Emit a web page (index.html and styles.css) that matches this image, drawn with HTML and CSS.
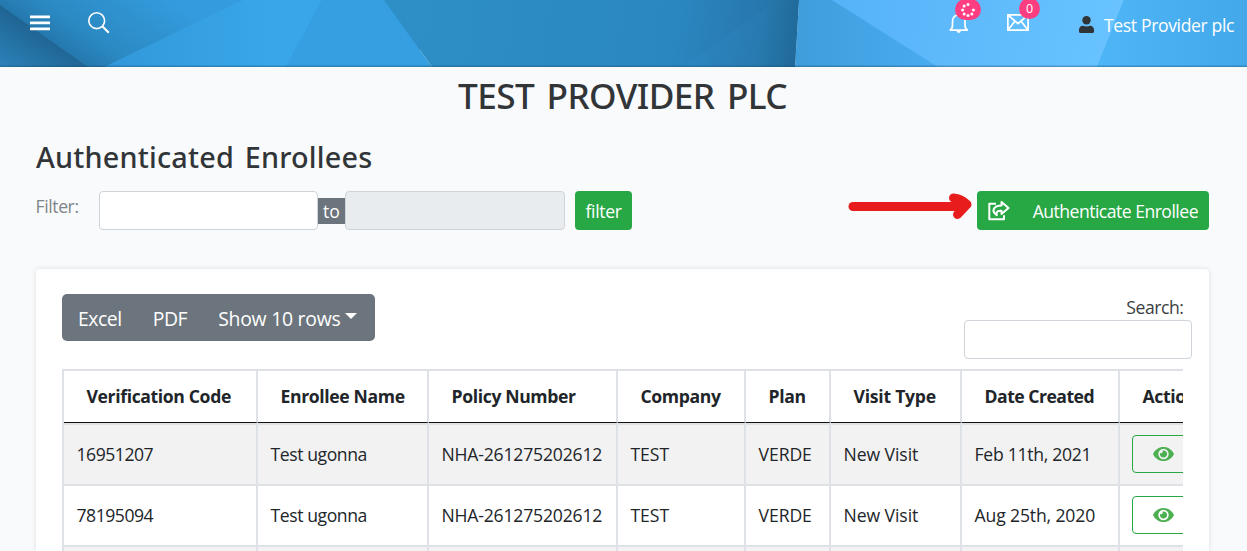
FILE: index.html
```html
<!DOCTYPE html>
<html lang="en">
<head>
<meta charset="utf-8">
<title>Authenticated Enrollees</title>
<link rel="stylesheet" href="styles.css">
</head>
<body>
<svg class="defs" aria-hidden="true">
  <symbol id="eye" viewBox="0 0 21 14">
    <path fill-rule="evenodd" d="M10.5 0C5.8 0 2 2.7 0 7c2 4.300 5.800 7 10.500 7S19 11.300 21 7C19 2.700 15.200 0 10.500 0zm0 12.200a5.200 5.200 0 1 1 0-10.400 5.200 5.200 0 0 1 0 10.400z"/>
    <path d="M10.500 3.400a3.600 3.600 0 1 1-3.500 2.700 1.900 1.900 0 0 0 2.600-2.500c.3-.1.600-.2.900-.2z"/>
  </symbol>
</svg>
<header class="topbar">
  <svg class="backdrop" viewBox="0 0 1247 67" preserveAspectRatio="none" aria-hidden="true">
    <defs>
      <linearGradient id="g1" gradientUnits="userSpaceOnUse" x1="45" y1="36" x2="105" y2="-50"><stop offset="0" stop-color="#2479ae"/><stop offset=".25" stop-color="#2b89c2"/><stop offset="1" stop-color="#349cde"/></linearGradient>
      <linearGradient id="g2" gradientUnits="userSpaceOnUse" x1="46" y1="34" x2="18" y2="78"><stop offset="0" stop-color="#1f6492"/><stop offset="1" stop-color="#2b82ba"/></linearGradient>
      <linearGradient id="g3" gradientUnits="userSpaceOnUse" x1="100" y1="0" x2="270" y2="0"><stop offset="0" stop-color="#3198d8"/><stop offset="1" stop-color="#38a6e9"/></linearGradient>
      <linearGradient id="g4" gradientUnits="userSpaceOnUse" x1="385" y1="0" x2="797" y2="60"><stop offset="0" stop-color="#2e8fc7"/><stop offset=".7" stop-color="#2b87c0"/><stop offset="1" stop-color="#246fa3"/></linearGradient>
      <linearGradient id="g5" gradientUnits="userSpaceOnUse" x1="690" y1="0" x2="798" y2="12"><stop offset="0" stop-color="#2c87c1"/><stop offset=".65" stop-color="#287bb1"/><stop offset="1" stop-color="#216a9a"/></linearGradient>
      <linearGradient id="g6" gradientUnits="userSpaceOnUse" x1="797" y1="0" x2="935" y2="0"><stop offset="0" stop-color="#3f9ddc"/><stop offset="1" stop-color="#49acef"/></linearGradient>
      <linearGradient id="g7" gradientUnits="userSpaceOnUse" x1="840" y1="0" x2="1120" y2="40"><stop offset="0" stop-color="#57b3f8"/><stop offset="1" stop-color="#68c3ff"/></linearGradient>
      <linearGradient id="g8" gradientUnits="userSpaceOnUse" x1="1100" y1="0" x2="1247" y2="0"><stop offset="0" stop-color="#4eb5f6"/><stop offset="1" stop-color="#43a8e9"/></linearGradient>
    </defs>
    <rect width="420" height="67" fill="url(#g1)"/>
    <path d="M0 5L88 67H0z" fill="url(#g2)"/>
    <path d="M243 0H322L286 67H104z" fill="url(#g3)"/>
    <path d="M322 0H384L432 67H286z" fill="#369fe1"/>
    <path d="M384 0H799L795 67H432z" fill="url(#g4)"/>
    <path d="M777 0H799L795 67H683z" fill="url(#g5)"/>
    <path d="M799 0H1247V67H795z" fill="url(#g6)"/>
    <path d="M832 0H1124L1097 67H938z" fill="url(#g7)"/>
    <path d="M1124 0H1247V67H1097z" fill="url(#g8)"/>
    <rect y="65.500" width="1247" height="1.500" fill="#1a4a6b" opacity=".35"/>
  </svg>
  <nav class="nav-left">
    <svg class="icon-menu" width="20" height="16" fill="#fff"><path d="M0 .500h20v2.700H0zM0 6.500h20v2.700H0zM0 12.500h20v2.700H0z"/></svg>
    <svg class="icon-search" width="22" height="22" fill="none" stroke="#fff" stroke-width="1.600"><circle cx="8.700" cy="8.700" r="7.900"/><path d="M14.300 14.300l6.500 6.500" stroke-width="2.100"/></svg>
  </nav>
  <nav class="nav-right">
    <div class="notice bell">
      <svg width="20" height="19" viewBox="0 0 20 19" fill="none" stroke="#fff" stroke-width="1.700"><path d="M.8 16.200c2-1 2.700-2.200 2.700-5V7.500C3.500 3.300 6 .8 9.700.8s6.300 2.500 6.300 6.700v3.700c0 2.800.8 4 2.800 5z"/><path d="M7.200 16.300h5l-1.200 2.400H8.500z" fill="#fff" stroke="none"/></svg>
      <span class="badge wide"><svg width="14" height="14" viewBox="-7 -7 14 14" fill="#fff"><circle cy="-5.400" r="1.500"/><circle cx="-3.900" cy="-3.900" r="1.500"/><circle cx="-5.400" r="1.500"/><circle cx="-3.900" cy="3.900" r="1.500"/><circle cy="5.400" r="1.500"/><circle cx="3.900" cy="3.900" r="1.500"/><circle cx="5.400" r="1.500"/></svg></span>
    </div>
    <div class="notice mail">
      <svg width="22" height="17" viewBox="0 0 22 17" fill="none" stroke="#fff" stroke-width="1.700"><path d="M.9.900h20.200v15.200H.9zM1 1l10 8.700L21 1M1 16l6.700-8.500M21 16l-6.700-8.500"/></svg>
      <span class="badge">0</span>
    </div>
    <div class="user">
      <svg width="15" height="17" viewBox="0 0 15 17" fill="#2f3437"><circle cx="7.500" cy="4.200" r="4.200"/><path d="M4 9.800c2.200 1 4.800 1 7 0 2.500 0 4 1.700 4 4v1.700c0 .9-.6 1.500-1.500 1.500h-12C.6 17 0 16.400 0 15.500v-1.700c0-2.300 1.500-4 4-4z"/></svg>
      <span>Test Provider plc</span>
    </div>
  </nav>
</header>
<main class="content">
  <h1 class="title">TEST PROVIDER PLC</h1>
  <h2 class="subtitle">Authenticated Enrollees</h2>
  <div class="filters">
    <span class="filter-label">Filter:</span>
    <input class="field from" type="text" aria-label="From">
    <span class="to">to</span>
    <input class="field until" type="text" aria-label="To" disabled>
    <button class="btn filter-btn">filter</button>
    <button class="btn auth-btn">
      <svg width="22" height="20" viewBox="0 0 22 20" fill="none" stroke="#fff" stroke-linejoin="round"><path d="M8 2.800H1.300v15.500H16V14.200" stroke-width="2"/><path d="M13.500 1l7 6-7 6V9.700C9.500 9.500 8 10.800 8.800 14.200 3.200 10.500 5 4.500 13.500 4.400z" stroke-width="2"/></svg>
      <span>Authenticate Enrollee</span>
    </button>
    <svg class="pointer" width="124" height="28" viewBox="0 0 124 28" fill="none" stroke="#e81c1c" stroke-linecap="round" stroke-linejoin="round" aria-hidden="true"><path d="M5 13.500H112" stroke-width="9"/><path d="M105.500 5Q113 5.500 119 11.500L109.500 21.500" stroke-width="9"/></svg>
  </div>
  <section class="card">
    <div class="tools">
      <div class="btn-group">
        <button>Excel</button><button>PDF</button><button class="rows">Show 10 rows<i class="caret"></i></button>
      </div>
      <label class="search"><span>Search:</span><input class="field" type="text"></label>
    </div>
    <div class="table-wrap">
      <div class="table">
        <div class="row head"><b>Verification Code</b><b>Enrollee Name</b><b>Policy Number</b><b>Company</b><b>Plan</b><b class="visit">Visit Type</b><b class="created">Date Created</b><b>Actions</b></div>
        <div class="row odd"><span class="code">16951207</span><span class="name">Test ugonna</span><span class="policy">NHA-261275202612</span><span>TEST</span><span>VERDE</span><span>New Visit</span><span class="date">Feb 11th, 2021</span><span class="act"><button class="view" aria-label="View"><svg width="21" height="14"><use href="#eye"/></svg></button></span></div>
        <div class="row"><span class="code">78195094</span><span class="name">Test ugonna</span><span class="policy">NHA-261275202612</span><span>TEST</span><span>VERDE</span><span>New Visit</span><span class="date-alt">Aug 25th, 2020</span><span class="act"><button class="view" aria-label="View"><svg width="21" height="14"><use href="#eye"/></svg></button></span></div>
        <div class="row odd"><span></span><span></span><span></span><span></span><span></span><span></span><span></span><span></span></div>
      </div>
    </div>
  </section>
</main>
</body>
</html>
```
FILE: styles.css
```css
* { box-sizing: border-box; }
html, body { height: 100%; }
body { margin: 0; overflow: hidden; display: flex; flex-direction: column; background: #f9fafc; color: #212529; font: 400 17.6px/26px "Open Sans", "Noto Sans", sans-serif; }
button { font: inherit; border: 0; padding: 0; background: none; }
.defs { position: absolute; width: 0; height: 0; }

.topbar { position: relative; flex: none; height: 67px; display: flex; justify-content: space-between; color: #fff; overflow: hidden; }
.backdrop { position: absolute; inset: 0; width: 100%; height: 100%; }
.nav-left, .nav-right { position: relative; display: flex; align-items: flex-start; }
.nav-left { padding-left: 30px; gap: 38px; }
.icon-menu { margin-top: 15px; }
.icon-search { margin-top: 12px; }
.nav-right { padding-right: 12px; }
.notice { position: relative; }
.notice > svg { display: block; }
.bell { width: 20px; margin: 14px 38px 0 0; }
.mail { width: 22px; margin: 14px 50px 0 0; }
.badge { position: absolute; left: 12px; top: -16px; width: 21px; height: 21px; border-radius: 11px; background: #ff3d81; display: flex; align-items: center; justify-content: center; font-size: 12.5px; line-height: 21px; }
.badge.wide { left: 6px; top: -15px; width: 26px; }
.user { display: flex; gap: 10px; margin-top: 12px; letter-spacing: -.37px; white-space: nowrap; width: 156px; }
.user svg { margin-top: 4px; flex: none; }

.content { flex: 1; min-height: 0; padding: 7px 38px 0 36px; display: flex; flex-direction: column; }
.title { margin: 0; font: 500 35.2px/42px "Noto Sans", sans-serif; letter-spacing: -.6px; word-spacing: 4px; text-align: center; color: #313538; }
.subtitle { margin: 23px 0 0; font: 500 28.8px/36px "Noto Sans", sans-serif; letter-spacing: .2px; word-spacing: 3px; color: #313538; }
.filters { position: relative; display: flex; align-items: flex-start; margin-top: 16px; height: 39px; }
.filter-label { width: 63px; margin-top: 2px; color: #80858a; letter-spacing: -.4px; text-indent: -.5px; }
.field { height: 39px; border: 1px solid #ced4da; border-radius: 4px; background: #fff; padding: 6px 12px; font: inherit; }
.from { width: 219px; }
.until { width: 220px; background: #e9ecef; }
.to { width: 27px; height: 26px; margin-top: 7px; text-align: center; color: #fff; background: #6c757d; }
.btn { height: 39px; background: #28a745; color: #fff; border-radius: 4px; white-space: nowrap; }
.filter-btn { width: 57px; margin-left: 10px; letter-spacing: -.35px; }
.auth-btn { width: 232px; margin-left: auto; padding: 1px 11px 0; display: flex; align-items: center; justify-content: space-between; letter-spacing: -.52px; }
.pointer { position: absolute; left: 812px; top: 2px; }

.card { flex: 1; min-height: 0; margin-top: 39px; padding: 25px 26px 0; background: #fff; border-radius: 4px 4px 0 0; box-shadow: 0 0 5px rgba(0, 0, 0, .12); }
.tools { display: flex; justify-content: space-between; align-items: flex-start; height: 75px; }
.btn-group { display: flex; height: 47px; padding: 3px 16px 0; gap: 31px; border-radius: 5px; background: #6c757d; width: 313px; }
.btn-group button { color: #fff; font-size: 19.4px; letter-spacing: -.45px; white-space: nowrap; display: flex; align-items: center; }
.btn-group .rows { letter-spacing: -.25px; }
.caret { margin: -6px 0 0 5px; border: 6px solid transparent; border-top-color: #fff; border-bottom: 0; }
.search { display: flex; flex-direction: column; align-items: flex-end; width: 228px; margin-right: -9px; letter-spacing: -.45px; color: #3a3e42; }
.search span { margin-right: 8.500px; }
.search .field { width: 228px; }

.table-wrap { overflow: hidden; }
.table { width: 1250px; border: 2px solid #dee2e6; border-bottom: 0; }
.row { display: grid; grid-template-columns: 194px 171px 189px 128px 85px 131px 158px 190px; height: 61px; border-bottom: 2px solid #dee2e6; }
.row > * { display: flex; align-items: center; padding: 0 0 2px 12.500px; border-right: 2px solid #dee2e6; white-space: nowrap; letter-spacing: -.07px; }
.row.odd { background: #f2f2f2; }
.head { height: 54px; }
.head b { padding: 0 0 1px 22.500px; border-bottom: 1px solid #111; font-weight: 700; letter-spacing: -.37px; }
.head .visit { letter-spacing: -.25px; }
.head .created { letter-spacing: -.51px; }
.row .code { letter-spacing: -.48px; }
.row .name { letter-spacing: -.42px; }
.row .policy { letter-spacing: -.19px; }
.row .date { letter-spacing: -.29px; }
.row .date-alt { letter-spacing: -.14px; }
.row .act { padding: 0 0 0 12px; }
.view { width: 62px; height: 38px; border: 1px solid #28a745; border-radius: 4px; display: flex; align-items: center; justify-content: center; margin-top: -1px; }
.view svg { fill: #4caf50; }
```
